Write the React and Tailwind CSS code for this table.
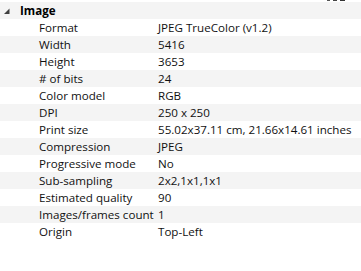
import React from 'react';

const ROWS = [
  ['Format', 'JPEG TrueColor (v1.2)'],
  ['Width', '5416'],
  ['Height', '3653'],
  ['# of bits', '24'],
  ['Color model', 'RGB'],
  ['DPI', '250 x 250'],
  ['Print size', '55.02x37.11 cm, 21.66x14.61 inches'],
  ['Compression', 'JPEG'],
  ['Progressive mode', 'No'],
  ['Sub-sampling', '2x2,1x1,1x1'],
  ['Estimated quality', '90'],
  ['Images/frames count', '1'],
  ['Origin', 'Top-Left'],
];

export default function App() {
  return (
    <div className="relative w-[361px] h-[271px] bg-white overflow-hidden text-[11.6px] leading-none text-[#111]" style={{ fontFamily: '"Open Sans", "Noto Sans", sans-serif' }}>
      {/* clipped toolbar glyph above the list */}
      <div className="absolute left-[327px] top-0 flex gap-[3px]">
        <div className="w-[3px] h-px bg-[#555]" />
        <div className="w-[4px] h-px bg-[#444]" />
        <div className="w-[5px] h-px bg-[#333]" />
      </div>

      <div className="pt-[2px]">
        <div className="flex items-center h-[17px] bg-[#f4f4f4]">
          <svg width="20" height="17" viewBox="0 0 20 17" className="shrink-0">
            <path d="M4 12 L9.5 12 L9.5 6.5 Z" fill="#404040" />
          </svg>
          <span className="font-bold text-black">Image</span>
        </div>
        {ROWS.map(([k, v], i) => (
          <div key={k} className={`flex items-center h-[17px] ${i % 2 === 1 ? 'bg-[#f4f4f4]' : 'bg-white'}`}>
            <span className="w-[158px] pl-[39px] shrink-0 whitespace-nowrap">{k}</span>
            <span className="whitespace-nowrap">{v}</span>
          </div>
        ))}
      </div>
    </div>
  );
}
